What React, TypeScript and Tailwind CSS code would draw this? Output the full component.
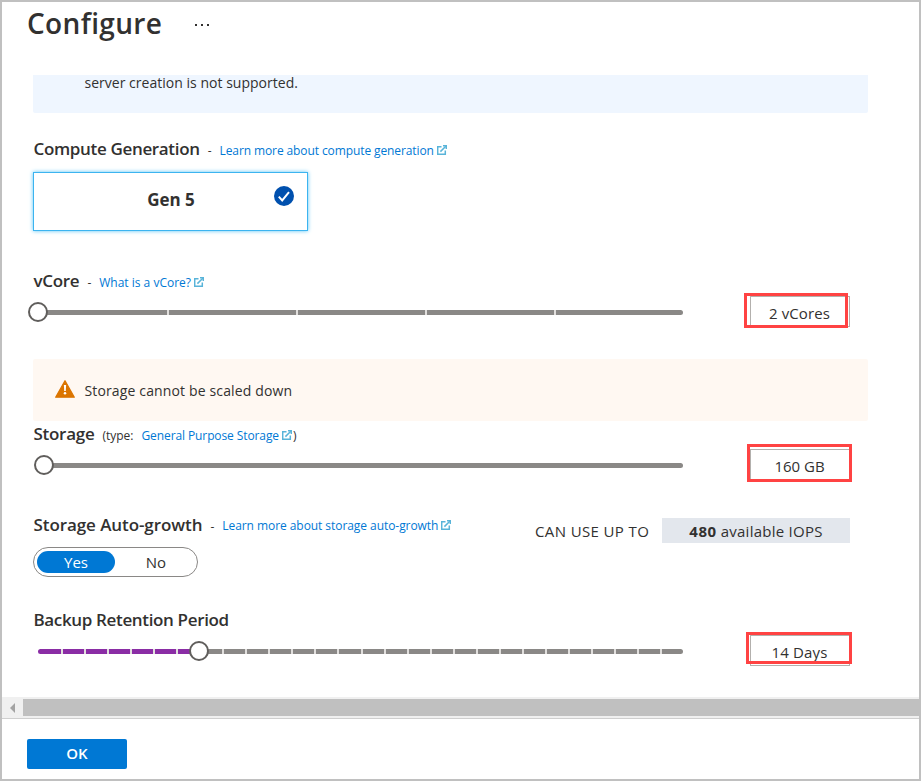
import type { ReactNode } from 'react';

function ExternalIcon() {
  return (
    <svg className="ml-[3px] inline-block h-[10px] w-[10px] shrink-0 align-baseline" viewBox="0 0 10 10" fill="none" stroke="#59b4d9" strokeWidth="1.5">
      <path d="M4.5 1.7H.7v7.6h7.6V5.5" />
      <path d="M3.4 6.6 8.8 1.2" />
      <path d="M6 .7h3.3V4" />
    </svg>
  );
}

function Heading({ children, className = '' }: { children: ReactNode; className?: string }) {
  return <h2 className={`pl-[0.5px] text-[17px] font-semibold whitespace-nowrap text-[#323130] ${className}`}>{children}</h2>;
}

function HelpLink({ children, className = 'tracking-[-0.1px]' }: { children: ReactNode; className?: string }) {
  return (
    <a className={`text-[12px] whitespace-nowrap text-[#0078d4] ${className}`}>
      {children}
      <ExternalIcon />
    </a>
  );
}

function Knob({ left }: { left: number }) {
  return (
    <span
      className="absolute top-1/2 h-5 w-5 -translate-y-1/2 rounded-full border-2 border-[#605e5c] bg-white"
      style={{ left }}
    />
  );
}

function Slider({ segments, filled = 0, knob }: { segments: number; filled?: number; knob: number }) {
  return (
    <div className="relative ml-[5px] flex h-5 w-[645px] items-center">
      <div className="grid h-[5px] w-full auto-cols-fr grid-flow-col overflow-hidden rounded-full">
        {Array.from({ length: segments }, (_, i) => (
          <span
            key={i}
            className={`border-[#e1dfdd] ${i > 0 ? 'border-l-2' : ''} ${i < filled ? 'bg-[#8a2da5]' : 'bg-[#8a8886]'}`}
          />
        ))}
      </div>
      <Knob left={knob} />
    </div>
  );
}

export default function App() {
  return (
    <div className="flex h-[781px] w-[921px] flex-col overflow-hidden border-2 border-[#c0c0c0] bg-white font-['Open_Sans','Noto_Sans',sans-serif] text-[15px] text-[#323130]">
      <header className="flex h-[73px] items-start pl-[25px]">
        <h1 className="text-[28px] leading-[43px] font-semibold tracking-[0.35px]">Configure</h1>
        <span className="mt-[22px] ml-[33px] flex gap-1">
          <i className="h-[2px] w-[2px] bg-[#323130]" />
          <i className="h-[2px] w-[2px] bg-[#323130]" />
          <i className="h-[2px] w-[2px] bg-[#323130]" />
        </span>
      </header>

      <main className="flex h-[622px] w-[866px] flex-col pl-[31px]">
        <div className="h-[38px] rounded-b-[2px] bg-[#eff6ff] pl-[51.5px] text-[14px] leading-4 tracking-[0.02px]">server creation is not supported.</div>

        <div className="flex h-[59px] items-baseline pt-6 leading-6">
          <Heading className="tracking-[-0.34px]">Compute Generation</Heading>
          <span className="mx-2 text-[12px]">-</span>
          <HelpLink>Learn more about compute generation</HelpLink>
        </div>

        <div className="flex h-[59px] w-[275px] border border-[#3cb4f0] bg-white pt-[13px] shadow-[0_0_4px_#59c4f5]">
          <span className="ml-[103px] w-[68px] text-center text-[17px] leading-7 font-bold">Gen 5</span>
          <svg className="ml-[69px] h-5 w-5" viewBox="0 0 20 20">
            <circle cx="10" cy="10" r="10" fill="#0050ae" />
            <path d="m4.8 10.6 3.4 3.8 6.8-8.2" fill="none" stroke="#fff" strokeWidth="2" />
          </svg>
        </div>

        <div className="flex h-[71px] items-baseline pt-[38px] leading-6">
          <Heading className="tracking-[-0.3px]">vCore</Heading>
          <span className="mx-2 text-[12px]">-</span>
          <HelpLink className="tracking-[0px]">What is a vCore?</HelpLink>
        </div>
        <div className="flex h-[57px] items-start">
          <Slider segments={5} knob={-10} />
          <div className="relative ml-[67px] -mt-[6px] flex h-[31px] w-[100px] shrink-0 items-center justify-center border border-[#b3b0ad] pt-[3px] pr-px tracking-[0.1px]">
            2 vCores
            <span className="absolute -top-[4px] -left-[7px] h-[35px] w-[104px] border-[3px] border-[#ff4343]" />
          </div>
        </div>

        <div className="flex h-[62px] shrink-0 items-center rounded-[2px] bg-[#fff8f2] pl-[22px]">
          <svg className="-mt-[2px] h-[18px] w-5" viewBox="0 0 20 18">
            <path d="M10 .7 19.3 17.2H.7Z" fill="#db7500" stroke="#db7500" strokeWidth="1.3" strokeLinejoin="round" />
            <path d="M8.9 5h2.2l-.3 6H9.2Z" fill="#fff" />
            <circle cx="10" cy="13.2" r="1.25" fill="#fff" />
          </svg>
          <span className="ml-[9.5px] text-[14px] tracking-[0.14px]">Storage cannot be scaled down</span>
        </div>

        <div className="flex h-[34px] items-baseline pt-px leading-6">
          <Heading className="tracking-[-0.28px]">Storage</Heading>
          <span className="ml-2 mr-[8px] text-[12px]">(type:</span>
          <HelpLink>General Purpose Storage</HelpLink>
          <span className="ml-px text-[12px]">)</span>
        </div>
        <div className="flex h-[57px] items-start">
          <Slider segments={1} knob={-4} />
          <div className="relative ml-[67px] -mt-[6px] flex h-[31px] w-[100px] shrink-0 items-center justify-center border border-[#b3b0ad] pt-[3px] pr-px">
            160 GB
            <span className="absolute -top-[6px] -left-[4px] h-[38px] w-[105px] border-[3px] border-[#ff4343]" />
          </div>
        </div>

        <div className="flex h-[95px]">
          <div className="w-[502px]">
            <div className="flex h-[35px] items-baseline pt-px leading-6">
              <Heading className="tracking-[-0.08px]">Storage Auto-growth</Heading>
              <span className="mx-2 text-[12px]">-</span>
              <HelpLink className="relative -top-px tracking-[-0.06px]">Learn more about storage auto-growth</HelpLink>
            </div>
            <div className="flex h-[30px] w-[165px] items-center rounded-full border border-[#8a8886] pl-[3px]">
              <span className="flex h-[22px] w-[78px] items-center justify-center rounded-full bg-[#0078d4] text-white">Yes</span>
              <span className="flex-1 text-center">No</span>
            </div>
          </div>
          <span className="mt-[6px] w-[127px] leading-[27px] tracking-[0.38px] whitespace-nowrap">CAN USE UP TO</span>
          <span className="mt-[6px] flex h-[25px] w-[188px] items-center justify-center bg-[#e3e7ed] pt-[2px] tracking-[0.25px] whitespace-pre"><b className="tracking-[0.5px]">480</b> available IOPS</span>
        </div>

        <div className="flex h-[34px] items-baseline pt-px leading-6">
          <Heading className="tracking-[-0.35px]">Backup Retention Period</Heading>
        </div>
        <div className="flex items-start">
          <Slider segments={28} filled={7} knob={151} />
          <div className="relative ml-[67px] -mt-[6px] flex h-[31px] w-[100px] shrink-0 items-center justify-center border border-[#b3b0ad] pt-[3px] pr-px tracking-[0.15px]">
            14 Days
            <span className="absolute -top-[4px] -left-[5px] h-[32px] w-[106px] border-[3px] border-[#ff4343]" />
          </div>
        </div>
      </main>

      <div className="flex h-[21px] shrink-0 items-center bg-[#f0f0f0]">
        <svg className="ml-2 mr-2 h-[10px] w-[5px]" viewBox="0 0 5 10">
          <path d="M5 0v10L0 5Z" fill="#a3a3a3" />
        </svg>
        <span className="h-[17px] flex-1 bg-[#c0c0c0]" />
      </div>
      <footer className="flex-1 border-t border-[#cfcfcf] pt-5 pl-[25px]">
        <button className="flex h-[30px] w-[100px] items-center justify-center rounded-[2px] bg-[#0078d4] pb-[3px] text-[15px] leading-7 font-semibold text-white">OK</button>
      </footer>
    </div>
  );
}
